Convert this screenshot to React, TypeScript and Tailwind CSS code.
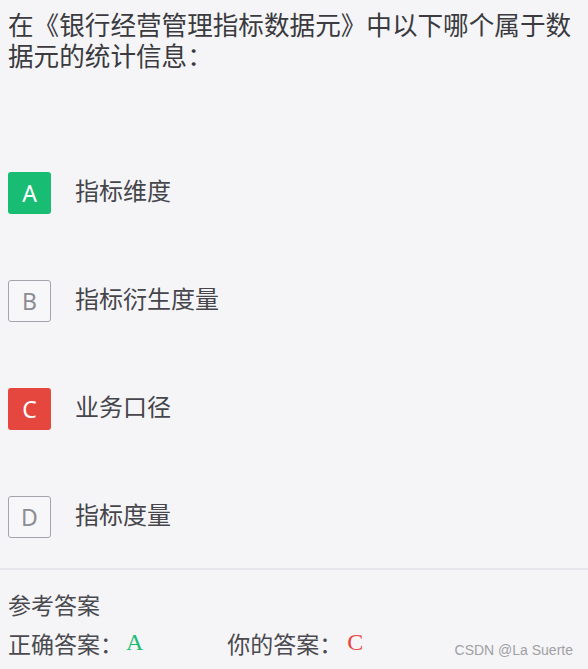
import React from 'react';

type Option = { key: string; text: string; state: 'correct' | 'wrong' | 'none' };

const options: Option[] = [
  { key: 'A', text: '指标维度', state: 'correct' },
  { key: 'B', text: '指标衍生度量', state: 'none' },
  { key: 'C', text: '业务口径', state: 'wrong' },
  { key: 'D', text: '指标度量', state: 'none' },
];

const font = { fontFamily: '"Noto Sans", "Noto Sans CJK SC", sans-serif' };

function OptionBox({ option }: { option: Option }) {
  const boxClass =
    option.state === 'correct'
      ? 'bg-[#18bc73] text-white'
      : option.state === 'wrong'
        ? 'bg-[#e5473f] text-white'
        : 'border border-[#a4a4ac] text-[#8c8c94] bg-[#f7f7f9]';

  return (
    <div className="flex items-center gap-[24px]">
      <div className={`w-[43px] h-[42px] rounded-[3px] flex items-center justify-center text-[23px] ${boxClass}`}>
        {option.key}
      </div>
      <span className="text-[24px] leading-[32px] text-[#45454b] -mt-[4px]">{option.text}</span>
    </div>
  );
}

export default function App() {
  return (
    <div className="relative w-[588px] h-[669px] bg-[#f5f5f7] flex flex-col overflow-hidden" style={font}>
      <p className="px-[8px] pt-[10px] text-[25.6px] leading-[31px] text-[#3a3a3f]">
        在《银行经营管理指标数据元》中以下哪个属于数据元的统计信息：
      </p>

      <div className="flex flex-col gap-[66px] px-[8px] mt-[100px]">
        {options.map(o => (
          <OptionBox key={o.key} option={o} />
        ))}
      </div>

      <div className="mt-[30px] border-t-2 border-[#e6e6ec] px-[8px] pt-[20px]">
        <p className="text-[23px] leading-[30px] text-[#4a4a50]">参考答案</p>
        <div className="flex items-center mt-[9px] text-[23px] leading-[30px] text-[#4a4a50]">
          <span>正确答案：</span>
          <span className="ml-[3px] -mt-[4px] text-[24px] text-[#18bc73]" style={{ fontFamily: '"Liberation Serif", serif' }}>A</span>
          <span className="ml-[84px]">你的答案：</span>
          <span className="ml-[5px] -mt-[4px] text-[24px] text-[#e5473f]" style={{ fontFamily: '"Liberation Serif", serif' }}>C</span>
        </div>
      </div>

      <span
        className="absolute right-[15px] bottom-[8px] text-[14px] text-[#a0a0a4]"
        style={{ fontFamily: '"Liberation Sans", Arial, sans-serif' }}
      >
        CSDN @La Suerte
      </span>
    </div>
  );
}
